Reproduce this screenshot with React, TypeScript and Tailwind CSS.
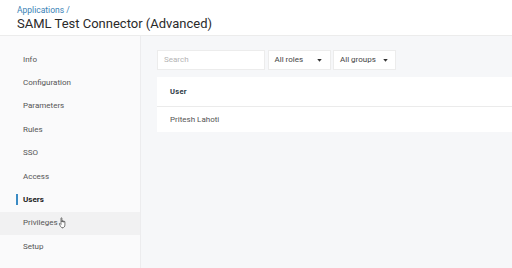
import { useState } from 'react';

const navItems = ['Info', 'Configuration', 'Parameters', 'Rules', 'SSO', 'Access', 'Users', 'Privileges', 'Setup'];

function Caret() {
  return (
    <svg width="5" height="3" viewBox="0 0 6 4" className="ml-auto">
      <path d="M0 0h6L3 3.5z" fill="#333" />
    </svg>
  );
}

function HandCursor() {
  return (
    <svg width="10" height="12" viewBox="0 0 10 12" className="absolute left-[58px] top-[5px]">
      <path
        d="M3 1.2c0-.6.9-.6.9 0V5l.1-.9c0-.6.9-.6.9 0v1l.1-.7c0-.6.9-.6.9 0v.9l.1-.5c0-.6.9-.6.9 0v3.2c0 1.6-1 2.8-2.6 2.8H4.6c-.9 0-1.5-.5-2-1.3L1.3 7.2c-.3-.5.3-1 .8-.6L3 7.5z"
        fill="#fff"
        stroke="#444"
        strokeWidth="0.7"
        strokeLinejoin="round"
      />
    </svg>
  );
}

export default function App() {
  const [active] = useState('Users');

  return (
    <div className="w-[512px] h-[268px] flex flex-col bg-white overflow-hidden" style={{ fontFamily: 'Roboto, "Liberation Sans", sans-serif' }}>
      <header className="h-[36px] px-[17px] pt-[4px] flex flex-col shrink-0 border-b border-[#ececec]">
        <a href="#" className="text-[8.5px] leading-[12px] text-[#3a82b5]">Applications /</a>
        <h1 className="text-[13px] leading-[16px] text-[#2a2a2a]">SAML Test Connector (Advanced)</h1>
      </header>

      <div className="flex flex-1 min-h-0">
        <nav className="w-[141px] shrink-0 bg-[#fafafb] border-r border-[#ececee] pt-[12px] flex flex-col">
          {navItems.map((item) => (
            <div
              key={item}
              className={`relative h-[23.4px] flex items-center pl-[23px] text-[8px] ${
                item === 'Privileges' ? 'bg-[#f1f1f2]' : ''
              } ${item === active ? 'font-bold text-[#222]' : 'text-[#555]'}`}
            >
              {item === active && <span className="absolute left-[16px] top-[6px] h-[11px] w-[1.5px] bg-[#3b8bc4]" />}
              {item}
              {item === 'Privileges' && <HandCursor />}
            </div>
          ))}
        </nav>

        <main className="flex-1 bg-[#f6f7f9] pl-[16px] pt-[14px]">
          <div className="flex gap-[2.5px] h-[20px]">
            <div className="w-[108px] bg-white border border-[#ececec] flex items-center px-[6px] text-[8px] text-[#b4b4b4]">
              Search
            </div>
            <div className="w-[63px] bg-white border border-[#ececec] flex items-center pl-[6px] pr-[8px] text-[8px] text-[#444]">
              All roles
              <Caret />
            </div>
            <div className="w-[63px] bg-white border border-[#ececec] flex items-center pl-[6px] pr-[7px] text-[8px] text-[#444]">
              All groups
              <Caret />
            </div>
          </div>

          <div className="mt-[7px] bg-white">
            <div className="h-[30px] flex items-center pl-[13px] text-[7.5px] font-bold tracking-[0.3px] text-[#2d3a45] border-b border-[#ebebeb]">
              User
            </div>
            <div className="h-[25px] flex items-center pl-[13px] text-[8px] text-[#555]">Pritesh Lahoti</div>
          </div>
        </main>
      </div>
    </div>
  );
}
